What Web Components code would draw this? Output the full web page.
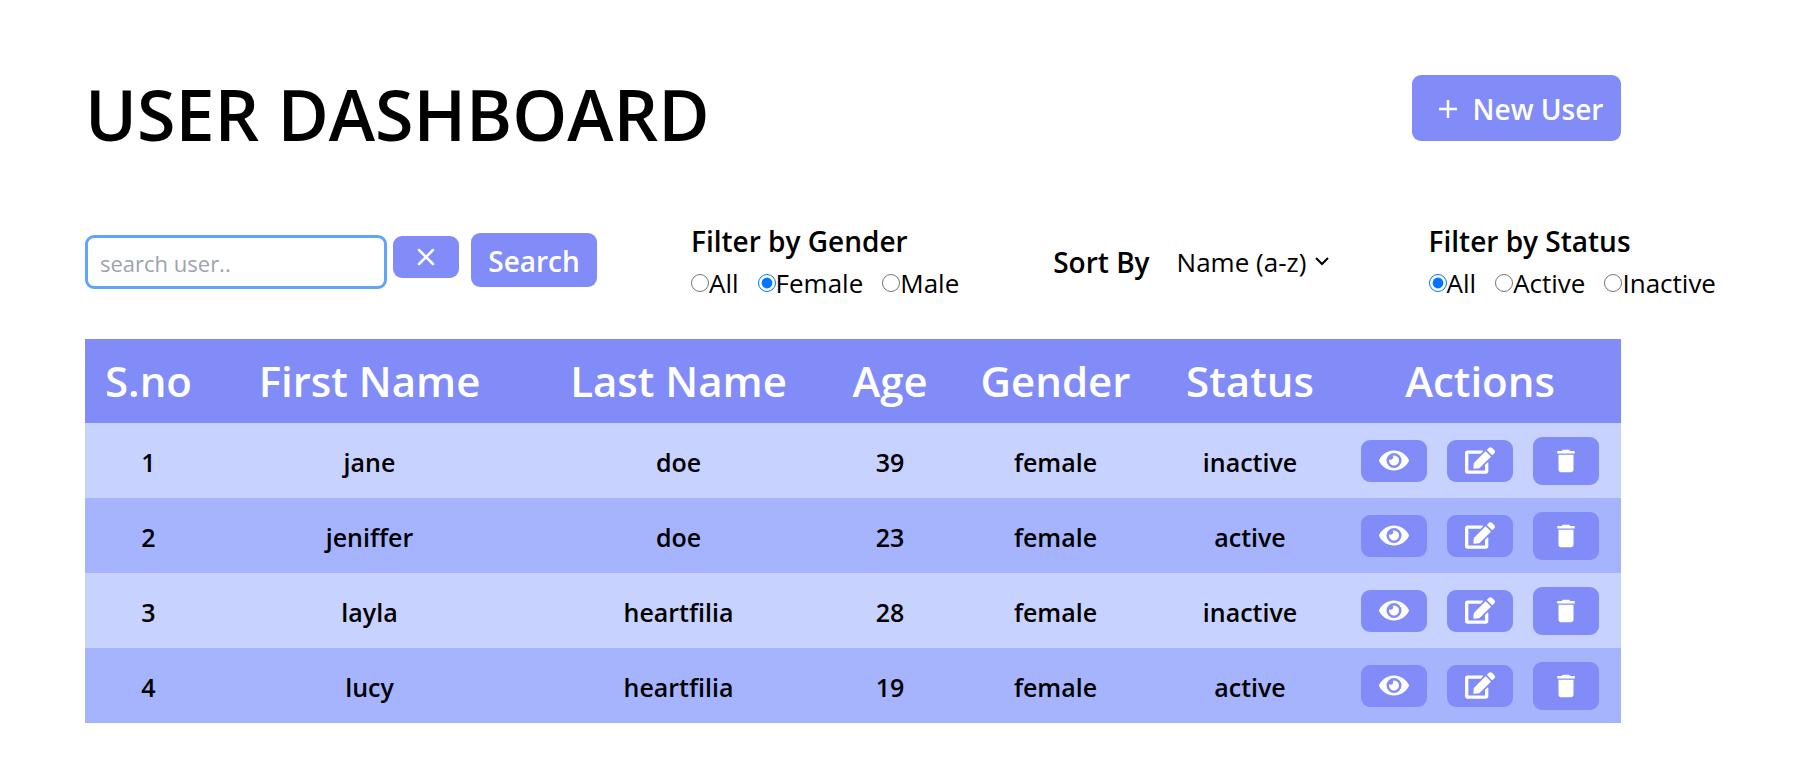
<!DOCTYPE html>
<html lang="en">
<head>
<meta charset="utf-8">
<title>User Dashboard</title>
<style>
body { margin: 0; background: #fff; color: #000; font-family: "Open Sans", "Noto Sans", sans-serif; }
</style>
</head>
<body>
<user-dashboard></user-dashboard>

<script>
const ICONS = {
  plus: ['0 0 24 24', '<path d="M12 3v18M3 12h18" fill="none" stroke="currentColor" stroke-width="2.5"/>'],
  close: ['0 0 24 24', '<path d="M5 5l14 14M19 5L5 19" fill="none" stroke="currentColor" stroke-width="2.5" stroke-linecap="round"/>'],
  eye: ['0 0 576 512', '<path d="M572.52 241.4C518.29 135.59 410.93 64 288 64S57.68 135.64 3.48 241.41a32.35 32.35 0 0 0 0 29.19C57.71 376.41 165.07 448 288 448s230.32-71.64 284.52-177.41a32.35 32.35 0 0 0 0-29.19zM288 400a144 144 0 1 1 144-144 143.93 143.93 0 0 1-144 144zm0-240a95.31 95.31 0 0 0-25.18 3.79 47.85 47.85 0 0 1-66.9 66.9A95.78 95.78 0 1 0 288 160z"/>'],
  edit: ['0 0 576 512', '<path d="M402.6 83.2l90.2 90.2c3.8 3.8 3.8 10 0 13.8L274.4 405.6l-92.8 10.3c-12.4 1.4-22.9-9.1-21.5-21.5l10.3-92.8L388.8 83.2c3.8-3.8 10-3.8 13.8 0zm162-22.9l-48.8-48.8c-15.2-15.2-39.9-15.2-55.2 0l-35.4 35.4c-3.8 3.8-3.8 10 0 13.8l90.2 90.2c3.8 3.8 10 3.8 13.8 0l35.4-35.4c15.2-15.3 15.2-40 0-55.2zM384 346.2V448H64V128h229.8c3.2 0 6.2-1.3 8.5-3.5l40-40c7.6-7.6 2.2-20.5-8.5-20.5H48C21.5 64 0 85.5 0 112v352c0 26.5 21.5 48 48 48h352c26.5 0 48-21.5 48-48V306.2c0-10.7-12.9-16-20.5-8.5l-40 40c-2.2 2.3-3.5 5.3-3.5 8.5z"/>'],
  trash: ['0 0 24 24', '<path d="M6 19c0 1.1.9 2 2 2h8c1.1 0 2-.9 2-2V7H6v12zM19 4h-3.5l-1-1h-5l-1 1H5v2h14V4z"/>'],
  chevron: ['0 0 14 14', '<path d="M1 3l6 6 6-6" fill="none" stroke="currentColor" stroke-width="2"/>']
};

class AppIcon extends HTMLElement {
  connectedCallback() {
    const [box, shape] = ICONS[this.getAttribute('name')];
    this.attachShadow({ mode: 'open' }).innerHTML = `
      <style>
        :host { display: block; flex: none; }
        svg { display: block; width: 100%; height: 100%; }
      </style>
      <svg viewBox="${box}" fill="currentColor" aria-hidden="true">${shape}</svg>`;
  }
}
customElements.define('app-icon', AppIcon);

class AppButton extends HTMLElement {
  connectedCallback() {
    const label = this.getAttribute('label');
    this.attachShadow({ mode: 'open' }).innerHTML = `
      <style>
        :host { display: block; flex: none; }
        button {
          box-sizing: border-box; width: 100%; height: 100%; margin: 0; padding: var(--button-padding, 0 18px); border: 0; border-radius: 9px;
          display: flex; align-items: center; justify-content: center; gap: 13px;
          background: #818cf8; color: #fff; font: 600 28px/42px "Open Sans", sans-serif; white-space: nowrap; cursor: pointer;
        }
      </style>
      <button type="button"${label ? ` aria-label="${label}"` : ''}><slot></slot></button>`;
  }
}
customElements.define('app-button', AppButton);

class SearchBox extends HTMLElement {
  connectedCallback() {
    this.attachShadow({ mode: 'open' }).innerHTML = `
      <style>
        :host { display: flex; align-items: flex-start; padding-bottom: 2px; }
        input {
          box-sizing: border-box; width: 302px; height: 54px; margin: 2px 6px 0 0; padding: 1px 12px 0;
          border: 3px solid #60a5fa; border-radius: 9px; outline: 0; background: #fff; color: #000;
          font: 400 22px/30px "Open Sans", sans-serif;
        }
        input::placeholder { color: #9ca3af; opacity: 1; }
        .clear { width: 66px; height: 42px; margin: 3px 12px 0 0; }
        .clear app-icon { width: 24px; height: 24px; }
        .go { width: 126px; height: 54px; --button-padding: 2px 18px 0; }
      </style>
      <input type="text" placeholder="search user.." aria-label="Search user">
      <app-button class="clear" label="Clear search"><app-icon name="close"></app-icon></app-button>
      <app-button class="go">Search</app-button>`;
  }
}
customElements.define('search-box', SearchBox);

class RadioFilter extends HTMLElement {
  connectedCallback() {
    const name = this.getAttribute('name');
    const selected = this.getAttribute('value');
    const options = this.getAttribute('options').split(',').map(o =>
      `<label><input type="radio" name="${name}" value="${o}"${o === selected ? ' checked' : ''}>${o}</label>`).join('');
    this.attachShadow({ mode: 'open' }).innerHTML = `
      <style>
        :host { display: block; }
        fieldset { margin: 0; padding: 0; border: 0; min-width: 0; }
        legend { padding: 0; font-size: 28px; line-height: 42px; font-weight: 600; white-space: nowrap; }
        div { display: flex; gap: 19px; }
        label { display: flex; align-items: center; font-size: 26px; line-height: 42px; white-space: nowrap; }
        input { width: 18px; height: 18px; margin: 0; accent-color: #0075ff; }
      </style>
      <fieldset><legend>${this.getAttribute('heading')}</legend><div>${options}</div></fieldset>`;
  }
}
customElements.define('radio-filter', RadioFilter);

class SortSelect extends HTMLElement {
  connectedCallback() {
    this.attachShadow({ mode: 'open' }).innerHTML = `
      <style>
        :host { display: flex; align-items: center; padding-right: 6px; }
        label { margin-right: 27px; font-size: 28px; line-height: 42px; font-weight: 600; white-space: nowrap; }
        span { display: grid; align-items: center; }
        select {
          grid-area: 1 / 1; appearance: none; margin: 0; padding: 0 22px 0 0; border: 0; background: none; color: #000;
          font: 400 26px/42px "Open Sans", sans-serif;
        }
        app-icon { grid-area: 1 / 1; justify-self: end; width: 14px; height: 14px; pointer-events: none; }
      </style>
      <label for="sort">Sort By</label>
      <span><select id="sort"><option>Name (a-z)</option><option>Name (z-a)</option></select><app-icon name="chevron"></app-icon></span>`;
  }
}
customElements.define('sort-select', SortSelect);

class RowActions extends HTMLElement {
  connectedCallback() {
    this.attachShadow({ mode: 'open' }).innerHTML = `
      <style>
        :host { display: flex; align-items: center; justify-content: center; gap: 20px; }
        app-button { width: 66px; height: 42px; }
        app-button:last-child { height: 48px; }
        app-icon { width: 30px; height: 27px; }
        app-icon[name="trash"] { height: 30px; }
      </style>
      <app-button label="View"><app-icon name="eye"></app-icon></app-button>
      <app-button label="Edit"><app-icon name="edit"></app-icon></app-button>
      <app-button label="Delete"><app-icon name="trash"></app-icon></app-button>`;
  }
}
customElements.define('row-actions', RowActions);

class UserTable extends HTMLElement {
  connectedCallback() {
    const heads = ['S.no', 'First Name', 'Last Name', 'Age', 'Gender', 'Status', 'Actions'];
    const widths = [127, 315, 303, 120, 211, 178, 282];
    const users = [
      ['jane', 'doe', 39, 'female', 'inactive'],
      ['jeniffer', 'doe', 23, 'female', 'active'],
      ['layla', 'heartfilia', 28, 'female', 'inactive'],
      ['lucy', 'heartfilia', 19, 'female', 'active']
    ];
    this.attachShadow({ mode: 'open' }).innerHTML = `
      <style>
        :host { display: block; }
        table { width: 100%; table-layout: fixed; border-collapse: collapse; text-align: center; }
        th, td { box-sizing: border-box; padding: 0; }
        th { height: 84px; background: #818cf8; color: #fff; font-size: 42px; line-height: 60px; font-weight: 600; white-space: nowrap; }
        td { height: 75px; padding-top: 2px; font-size: 25px; line-height: 42px; font-weight: 600; }
        td:last-child { padding-top: 0; }
        tbody tr { background: #c7d2fe; }
        tbody tr:nth-child(even) { background: #a5b4fc; }
      </style>
      <table>
        <colgroup>${widths.map(w => `<col style="width:${w}px">`).join('')}</colgroup>
        <thead><tr>${heads.map(h => `<th scope="col">${h}</th>`).join('')}</tr></thead>
        <tbody>${users.map((u, i) => `<tr><td>${i + 1}</td>${u.map(v => `<td>${v}</td>`).join('')}<td><row-actions></row-actions></td></tr>`).join('')}</tbody>
      </table>`;
  }
}
customElements.define('user-table', UserTable);

class UserDashboard extends HTMLElement {
  connectedCallback() {
    this.attachShadow({ mode: 'open' }).innerHTML = `
      <style>
        :host { display: block; padding: 60px 173px 60px 85px; }
        header { display: flex; align-items: flex-start; justify-content: space-between; }
        h1 { margin: 0; padding-top: 2px; font-size: 70px; line-height: 104px; font-weight: 600; white-space: nowrap; }
        .new { width: 209px; height: 66px; margin-top: 15px; --button-padding: 2px 18px 0 24px; }
        .new app-icon { width: 24px; height: 24px; }
        .filters { display: flex; align-items: center; justify-content: space-between; margin: 54px -95px 35px 0; }
      </style>
      <header>
        <h1>USER DASHBOARD</h1>
        <app-button class="new"><app-icon name="plus"></app-icon>New User</app-button>
      </header>
      <section class="filters">
        <search-box></search-box>
        <radio-filter heading="Filter by Gender" name="gender" options="All,Female,Male" value="Female"></radio-filter>
        <sort-select></sort-select>
        <radio-filter heading="Filter by Status" name="status" options="All,Active,Inactive" value="All"></radio-filter>
      </section>
      <user-table></user-table>`;
  }
}
customElements.define('user-dashboard', UserDashboard);
</script>
</body>
</html>
